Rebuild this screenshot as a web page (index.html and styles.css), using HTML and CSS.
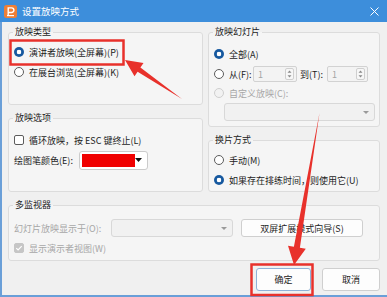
FILE: index.html
```html
<!DOCTYPE html>
<html lang="zh-CN">
  <head>
    <meta charset="utf-8">
    <title>设置放映方式</title>
    <link rel="stylesheet" href="styles.css">
  </head>
  <body>
    <div class="window">
      <header class="title-bar">
        <svg class="app-icon" width="13" height="13" viewBox="0 0 13 13">
          <rect width="13" height="13" rx="2.5" fill="#ef7f36"/>
          <path d="M4.2 10.6V2.9h3.4a2.3 2.3 0 0 1 0 4.6H4.2" fill="none" stroke="#fff" stroke-width="1.4"/>
          <path d="M3 10.6h7" stroke="#fff" stroke-width="1.2"/>
        </svg>
        <span class="title">设置放映方式</span>
        <svg class="close" width="9" height="9" viewBox="0 0 9 9">
          <path d="M0.5 0.5l8 8M8.5 0.5l-8 8" stroke="#fff" stroke-width="1"/>
        </svg>
      </header>

      <div class="dialog">
        <div class="columns">
          <div class="col col-left">
            <fieldset class="group g-type">
              <legend>放映类型</legend>
              <div class="row"><span class="radio on"></span>演讲者放映(全屏幕)(P)</div>
              <div class="row"><span class="radio"></span>在展台浏览(全屏幕)(K)</div>
            </fieldset>
            <fieldset class="group g-options">
              <legend>放映选项</legend>
              <div class="row"><span class="check"></span>循环放映，按 ESC 键终止(L)</div>
              <div class="row">
                <span class="lbl lbl-pen">绘图笔颜色(E):</span>
                <span class="color-select">
                  <span class="swatch"></span>
                  <svg class="caret" width="7" height="4" viewBox="0 0 7 4"><path d="M0 0h7L3.5 4z" fill="#111"/></svg>
                </span>
              </div>
            </fieldset>
          </div>

          <div class="col col-right">
            <fieldset class="group g-slides">
              <legend>放映幻灯片</legend>
              <div class="row"><span class="radio on"></span>全部(A)</div>
              <div class="row row-range">
                <span class="radio"></span>
                <span class="lbl lbl-from">从(F):</span>
                <span class="spin spin-from">
                  <span class="val">1</span>
                  <svg class="spin-btn" width="9" height="12" viewBox="0 0 9 12">
                    <rect x="0.5" y="0.5" width="8" height="11" rx="1.5" fill="#f7f7f7" stroke="#cfcfcf"/>
                    <path d="M2.5 4.8h4L4.5 2.6z M2.5 7.2h4L4.5 9.4z" fill="#8a8a8a"/>
                  </svg>
                </span>
                <span class="lbl lbl-to">到(T):</span>
                <span class="spin spin-to">
                  <span class="val">1</span>
                  <svg class="spin-btn" width="9" height="12" viewBox="0 0 9 12">
                    <rect x="0.5" y="0.5" width="8" height="11" rx="1.5" fill="#f7f7f7" stroke="#cfcfcf"/>
                    <path d="M2.5 4.8h4L4.5 2.6z M2.5 7.2h4L4.5 9.4z" fill="#8a8a8a"/>
                  </svg>
                </span>
              </div>
              <div class="row row-short disabled"><span class="radio dim"></span>自定义放映(C):</div>
              <div class="select select-show">
                <svg class="caret" width="6" height="3" viewBox="0 0 6 3"><path d="M0 0h6L3 3z" fill="#9a9a9a"/></svg>
              </div>
            </fieldset>
            <fieldset class="group g-advance">
              <legend>换片方式</legend>
              <div class="row"><span class="radio"></span>手动(M)</div>
              <div class="row"><span class="radio on"></span>如果存在排练时间，则使用它(U)</div>
            </fieldset>
          </div>
        </div>

        <fieldset class="group g-monitor">
          <legend>多监视器</legend>
          <div class="row">
            <span class="lbl lbl-monitor disabled">幻灯片放映显示于(O):</span>
            <div class="select select-monitor">
              <svg class="caret" width="6" height="3" viewBox="0 0 6 3"><path d="M0 0h6L3 3z" fill="#9a9a9a"/></svg>
            </div>
            <button class="btn btn-wizard">双屏扩展模式向导(S)</button>
          </div>
          <div class="row disabled">
            <span class="check checked dim">
              <svg width="8" height="8" viewBox="0 0 8 8"><path d="M1.3 4.2l1.8 1.8 3.6-3.8" fill="none" stroke="#fff" stroke-width="1.2"/></svg>
            </span>显示演示者视图(W)
          </div>
        </fieldset>

        <div class="buttons">
          <button class="btn btn-ok">确定</button>
          <button class="btn btn-cancel">取消</button>
        </div>
      </div>

      <!-- red annotations drawn over the dialog -->
      <svg class="annotations" width="387" height="297" viewBox="0 0 387 297">
        <rect x="10.5" y="40.5" width="113" height="24" fill="none" stroke="#e8312b" stroke-width="2.5"/>
        <rect x="251.5" y="264.5" width="61" height="30.5" fill="none" stroke="#e8312b" stroke-width="2.5"/>
        <polygon points="182,99 140.4,67.5 143.5,63 125,60 134.5,76.2 137.6,71.7" fill="#e8312b"/>
        <polygon points="319.5,113 299.9,247.7 305.8,248.7 294,265 288,245.7 293.9,246.7" fill="#e8312b"/>
      </svg>
    </div>
  </body>
</html>
```

FILE: styles.css
```css
* {
  box-sizing: border-box;
}
html, body {
  margin: 0;
}
body {
  width: 387px;
  height: 297px;
  overflow: hidden;
  background: #fff;
  font-family: "Noto Sans CJK SC", "Noto Sans", sans-serif;
  font-size: 9px;
  color: #1c1c1c;
}
.window {
  position: relative;
  width: 387px;
  height: 297px;
  display: flex;
  flex-direction: column;
  background: #f0f0f0;
}

.title-bar {
  height: 22px;
  flex: none;
  display: flex;
  align-items: center;
  padding: 0 8px 0 4px;
  background: #3d8edb;
  color: #fff;
}
.app-icon {
  flex: none;
}
.title {
  margin-left: 5px;
  font-size: 9.5px;
}
.close {
  margin-left: auto;
}

.dialog {
  flex: 1;
  padding: 5px 7px 0 6px;
  border-left: 2px solid #6a9fd8;
  border-bottom: 2px solid #6a9fd8;
}
.columns {
  display: flex;
  gap: 5px;
}
.col {
  display: flex;
  flex-direction: column;
  gap: 8px;
}
.col-left {
  width: 195px;
}
.col-right {
  flex: 1;
}

.group {
  margin: 0;
  min-width: 0;
  padding: 5px 4px 0;
  border: 1px solid #dcdcdc;
  border-radius: 3px;
  background: #f5f5f5;
}
.group legend {
  padding: 0 2px;
  line-height: 10px;
  color: #1c1c1c;
}
.g-type { height: 78px; }
.g-options { height: 79px; padding-top: 7px; }
.g-slides { height: 100px; padding-top: 7px; }
.g-advance { height: 57px; }
.g-monitor { height: 61px; margin-top: 8px; padding-top: 8px; }

.row {
  display: flex;
  align-items: center;
  height: 20px;
  gap: 5px;
  white-space: nowrap;
}
.row-short {
  height: 18px;
}
.disabled {
  color: #a7a7a7;
}

.radio {
  flex: none;
  width: 10px;
  height: 10px;
  margin-left: 1px;
  border: 1px solid #5c5c5c;
  border-radius: 50%;
  background: #fff;
}
.radio.on {
  border: none;
  background: radial-gradient(circle, #fff 0 2px, #17599f 2.6px);
}
.radio.dim {
  border-color: #cfcfcf;
  background: #f2f2f2;
}
.check {
  flex: none;
  display: flex;
  align-items: center;
  justify-content: center;
  width: 10px;
  height: 10px;
  margin-left: 1px;
  border: 1px solid #5c5c5c;
  border-radius: 2px;
  background: #fff;
}
.check.dim {
  border-color: #c6c6c6;
  background: #c6c6c6;
}

.lbl {
  flex: none;
}
.lbl-pen {
  width: 60px;
  margin-left: 1px;
}
.lbl-from {
  width: 24px;
}
.lbl-to {
  width: 27px;
  margin-left: -2px;
}
.lbl-monitor {
  width: 92px;
  margin-left: 1px;
}
.row-range .spin-from {
  margin-left: -5px;
}
.row-range .spin-to {
  margin-left: -5px;
}

.spin {
  display: flex;
  align-items: center;
  height: 16px;
  padding: 0 2px 0 4px;
  border: 1px solid #d2d2d2;
  border-radius: 2px;
  background: #f3f3f3;
  color: #a5a5a5;
}
.spin .val {
  flex: 1;
}
.spin-from {
  width: 44px;
}
.spin-to {
  width: 41px;
}

.color-select {
  display: flex;
  align-items: center;
  width: 69px;
  height: 19px;
  padding: 0 5px 0 2px;
  border: 1px solid #cbcbcb;
  border-radius: 3px;
  background: #fff;
}
.swatch {
  width: 53px;
  height: 13px;
  background: #f00000;
}
.color-select .caret {
  margin-left: auto;
}

.select {
  display: flex;
  align-items: center;
  justify-content: flex-end;
  height: 18px;
  padding-right: 5px;
  border: 1px solid #d8d8d8;
  border-radius: 3px;
  background: #f1f1f1;
}
.select-show {
  width: 151px;
  margin: 1px 0 0 11px;
}
.select-monitor {
  width: 122px;
  flex: none;
}

.btn {
  font: inherit;
  color: #1c1c1c;
  height: 18px;
  padding: 0;
  border: 1px solid #cfcfcf;
  border-radius: 3px;
  background: #fdfdfd;
}
.btn-wizard {
  width: 122px;
  margin-left: 3px;
}
.buttons {
  display: flex;
  justify-content: flex-end;
  gap: 11px;
  margin-top: 7px;
}
.buttons .btn {
  height: 23px;
}
.btn-ok {
  width: 55px;
  border-color: #8fb2d8;
}
.btn-cancel {
  width: 58px;
}

.annotations {
  position: absolute;
  top: 0;
  left: 0;
  pointer-events: none;
}
```
